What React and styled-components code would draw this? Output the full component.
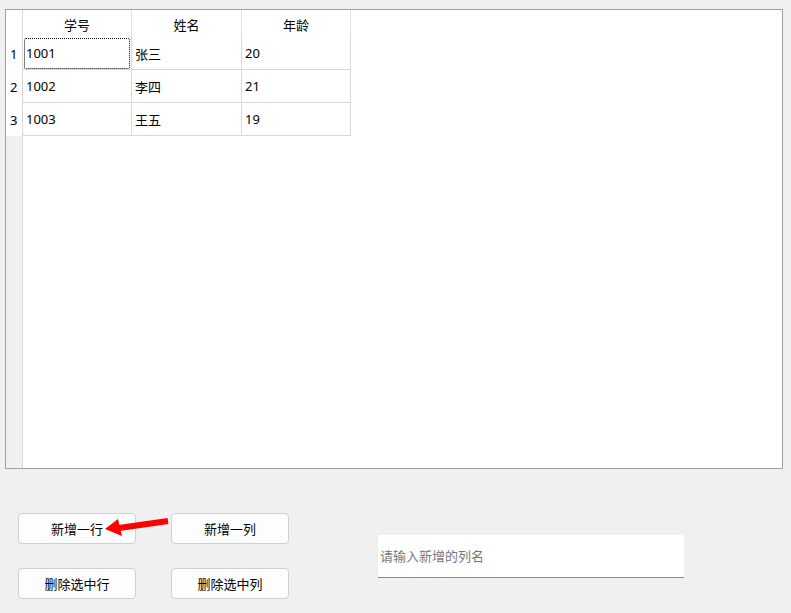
import React from 'react';
import styled, { createGlobalStyle } from 'styled-components';

const GlobalStyle = createGlobalStyle`
    html, body {
        margin: 0;
        padding: 0;
        background: #f0f0f0;
    }
    * {
        box-sizing: border-box;
    }
`;

const FONT = `"Noto Sans", "Noto Sans CJK SC", sans-serif`;

const columns = ['学号', '姓名', '年龄'];
const rows = [
    ['1001', '张三', '20'],
    ['1002', '李四', '21'],
    ['1003', '王五', '19'],
];

export default function App() {
    return (
        <Window>
            <GlobalStyle />
            <TableFrame>
                <VHeader>
                    <Corner />
                    {rows.map((_, i) => <RowNumber key={i}>{i + 1}</RowNumber>)}
                </VHeader>
                <Viewport>
                    <HeaderRow>
                        {columns.map(c => <HeaderCell key={c}>{c}</HeaderCell>)}
                    </HeaderRow>
                    {rows.map((row, r) => (
                        <Row key={r}>
                            {row.map((v, c) => (
                                <Cell key={c} focused={r === 0 && c === 0}>{v}</Cell>
                            ))}
                        </Row>
                    ))}
                </Viewport>
            </TableFrame>

            <Controls>
                <ButtonGrid>
                    <Button>新增一行</Button>
                    <Button>新增一列</Button>
                    <Button>删除选中行</Button>
                    <Button>删除选中列</Button>
                </ButtonGrid>
                <ColumnInput placeholder="请输入新增的列名" />
            </Controls>

            <Arrow width="72" height="28" viewBox="0 0 72 28">
                <line x1="19" y1="16" x2="68" y2="9" stroke="#ff0000" strokeWidth="6" />
                <polygon points="5,17 18,7 22,24" fill="#ff0000" />
            </Arrow>
        </Window>
    );
}

const Window = styled.div`
    position: relative;
    width: 791px;
    height: 613px;
    padding: 9px 8px 0 5px;
    background: #f0f0f0;
    font-family: ${FONT};
    font-size: 13px;
    color: #000;
    overflow: hidden;
`;

const TableFrame = styled.div`
    display: flex;
    width: 778px;
    height: 460px;
    border: 1px solid #a0a0a0;
    background: #ffffff;
`;

const VHeader = styled.div`
    display: flex;
    flex-direction: column;
    width: 16px;
    background: #f0f0f0;
`;

const Corner = styled.div`
    height: 27px;
    background: #ffffff;
`;

const RowNumber = styled.div`
    display: flex;
    align-items: center;
    height: 33px;
    padding-left: 4px;
    background: #ffffff;
`;

const Viewport = styled.div`
    flex: 1;
    border-left: 1px solid #d8d8d8;
`;

const HeaderRow = styled.div`
    display: flex;
    height: 27px;
`;

const HeaderCell = styled.div`
    display: flex;
    align-items: center;
    justify-content: center;
    width: 110px;
    padding-top: 1px;
    border-right: 1px solid #e2e2e2;
    &:first-child,
    &:last-child {
        width: 109px;
    }
`;

const Row = styled.div`
    display: flex;
    height: 33px;
`;

const Cell = styled.div`
    position: relative;
    display: flex;
    align-items: center;
    width: 110px;
    padding-left: 3px;
    border-right: 1px solid #d8d8d8;
    border-bottom: 1px solid #d8d8d8;
    &:first-child,
    &:last-child {
        width: 109px;
    }
    ${p => p.focused && `
        &::after {
            content: '';
            position: absolute;
            top: 1px;
            left: 1px;
            right: 1px;
            bottom: 0;
            border: 1px dotted #000;
            border-radius: 2px;
        }
    `}
`;

const Controls = styled.div`
    display: flex;
    align-items: center;
    margin-top: 44px;
    padding-left: 13px;
`;

const ButtonGrid = styled.div`
    display: grid;
    grid-template-columns: 118px 118px;
    grid-auto-rows: 31px;
    column-gap: 35px;
    row-gap: 24px;
`;

const Button = styled.button`
    font-family: ${FONT};
    font-size: 13px;
    color: #000;
    background: #fdfdfd;
    border: 1px solid #d0d0d0;
    border-radius: 4px;
    padding: 0;
`;

const ColumnInput = styled.input`
    width: 306px;
    height: 43px;
    margin-left: 89px;
    padding: 0 2px;
    font-family: ${FONT};
    font-size: 13px;
    background: #ffffff;
    border: none;
    border-bottom: 1px solid #8a8a8a;
    border-radius: 2px 2px 0 0;
    outline: none;
    &::placeholder {
        color: #777777;
    }
`;

const Arrow = styled.svg`
    position: absolute;
    left: 100px;
    top: 512px;
`;
